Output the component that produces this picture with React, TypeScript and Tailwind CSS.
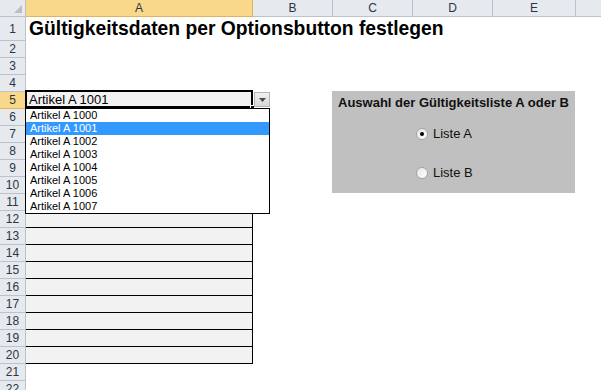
import React from 'react';

const font = "font-['Liberation_Sans',Arial,sans-serif]";

const colWidths = ['w-[227px]', 'w-[80px]', 'w-[80px]', 'w-[80px]', 'w-[83px]', 'w-[110px]'];
const colNames = ['A', 'B', 'C', 'D', 'E', 'F'];
const rows = Array.from({ length: 22 }, (_, i) => i + 1);
const items = ['1000', '1001', '1002', '1003', '1004', '1005', '1006', '1007'];

const RowHead = ({ n }: { n: number }) => (
  <div
    className={`w-[26px] shrink-0 border-r border-b text-center text-[12px] text-[#2b3645] ${
      n === 5 ? 'bg-[#f9d78b] border-[#e0b25c]' : 'bg-[#e6e9ed] border-[#bcc2ca]'
    }`}
  >
    <span className="flex h-full items-center justify-center">{n}</span>
  </div>
);

const Radio = ({ checked }: { checked?: boolean }) => (
  <span className="flex h-[12px] w-[12px] items-center justify-center rounded-full border border-[#a4a4a4] bg-gradient-to-br from-[#e6e6e6] to-white">
    {checked && <span className="h-[4px] w-[4px] rounded-full bg-black" />}
  </span>
);

export default function App() {
  return (
    <div className={`relative h-[390px] w-[601px] overflow-hidden bg-white ${font}`}>
      {/* column headers */}
      <div className="flex h-[17px]">
        <div className="relative w-[26px] shrink-0 border-r border-b border-[#bcc2ca] bg-[#e6e9ed]">
          <svg className="absolute right-[3px] bottom-[3px]" width="8" height="8" viewBox="0 0 8 8">
            <polygon points="8,0 8,8 0,8" fill="#b9bec5" />
          </svg>
        </div>
        {colNames.map((c, i) => (
          <div
            key={c}
            className={`${colWidths[i]} shrink-0 border-r border-b text-center text-[12px] leading-[16px] text-[#2b3645] ${
              c === 'A' ? 'bg-[#f9d78b] border-[#e0b25c]' : 'bg-[#e6e9ed] border-[#bcc2ca]'
            }`}
          >
            {c}
          </div>
        ))}
      </div>

      {rows.map((n) => {
        const boxed = n >= 5 && n <= 20;
        return (
          <div key={n} className={`flex ${n === 1 ? 'h-[24px]' : 'h-[17px]'}`}>
            <RowHead n={n} />
            <div
              className={`relative w-[227px] shrink-0 ${
                boxed ? 'bg-[#f2f2f2] border-r border-b border-black' : ''
              }`}
            >
              {n === 1 && (
                <span className="absolute left-[3px] top-0 whitespace-nowrap text-[19.3px] font-bold leading-[24px] text-black">
                  Gültigkeitsdaten per Optionsbutton festlegen
                </span>
              )}
              {n === 5 && (
                <>
                  <span className="block pl-[3px] text-[13px] leading-[16px] text-black">Artikel A 1001</span>
                  <span className="absolute -top-[2px] -left-[1px] -right-[1px] bottom-0 border-2 border-black" />
                  <span className="absolute -right-[3px] -bottom-[2px] h-[5px] w-[5px] border border-white bg-black" />
                </>
              )}
            </div>
          </div>
        );
      })}

      {/* dropdown button */}
      <div className="absolute left-[254px] top-[92px] flex h-[15px] w-[16px] items-center justify-center border border-[#b4b4b4] bg-gradient-to-b from-[#f0f0f0] to-[#d8d8d8]">
        <svg width="7" height="4" viewBox="0 0 7 4">
          <polygon points="0,0 7,0 3.5,4" fill="#4a4a4a" />
        </svg>
      </div>

      {/* dropdown list */}
      <div className="absolute left-[25px] top-[108px] w-[245px] border border-black bg-white">
        {items.map((it) => (
          <div
            key={it}
            className={`h-[13px] pl-[4px] text-[11px] leading-[13px] ${
              it === '1001' ? 'bg-[#3399ff] text-white' : 'text-black'
            }`}
          >
            Artikel A {it}
          </div>
        ))}
      </div>

      {/* option group */}
      <div className="absolute left-[332px] top-[91px] h-[102px] w-[243px] bg-[#c0c0c0]">
        <div className="pt-[4px] text-center text-[13px] font-bold leading-[15px] text-[#111]">
          Auswahl der Gültigkeitsliste A oder B
        </div>
        <div className="ml-[84px] mt-[16px] flex h-[15px] items-center gap-[5px] text-[13px] text-[#111]">
          <Radio checked />
          <span>Liste A</span>
        </div>
        <div className="ml-[84px] mt-[24px] flex h-[15px] items-center gap-[5px] text-[13px] text-[#111]">
          <Radio />
          <span>Liste B</span>
        </div>
      </div>
    </div>
  );
}
